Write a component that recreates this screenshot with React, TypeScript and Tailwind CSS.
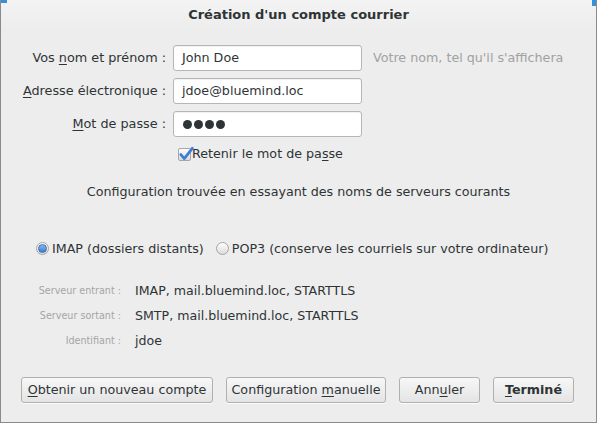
import React from 'react';

const font = { fontFamily: '"DejaVu Sans", sans-serif' };

const U: React.FC<{ children: React.ReactNode }> = ({ children }) => (
  <span className="underline underline-offset-2">{children}</span>
);

const Field: React.FC<{ label: React.ReactNode; value: React.ReactNode; hint?: string }> = ({ label, value, hint }) => (
  <div className="flex items-center h-[26px]">
    <div className="w-[165px] text-right text-[12.8px] text-[#2e3436]">{label}</div>
    <div className="w-[189px] h-[26px] ml-[7px] flex items-center px-[8px] bg-white border border-[#b6b6b3] rounded-[3px] text-[12.7px] text-[#2e3436] shadow-[inset_0_1px_1px_rgba(0,0,0,0.06)]">
      {value}
    </div>
    {hint && <div className="ml-[11px] text-[12.7px] text-[#a1a1a1]">{hint}</div>}
  </div>
);

const Radio: React.FC<{ checked?: boolean }> = ({ checked }) => (
  <span className="inline-flex w-[13px] h-[13px] rounded-full border border-[#a6a6a6] bg-gradient-to-b from-[#fdfdfd] to-[#dcdcdc] items-center justify-center">
    {checked && <span className="w-[9px] h-[9px] rounded-full bg-gradient-to-b from-[#8ab7ea] to-[#3a7fd3] border border-[#3b6fb0]" />}
  </span>
);

const Info: React.FC<{ label: string; value: string }> = ({ label, value }) => (
  <div className="flex items-center h-[25px]">
    <div className="w-[120px] text-right text-[9.6px] text-[#a5a5a5]">{label}</div>
    <div className="ml-[14px] text-[12.6px] text-[#2e3436]">{value}</div>
  </div>
);

const Btn: React.FC<{ children: React.ReactNode; w: string; bold?: boolean }> = ({ children, w, bold }) => (
  <button
    className={`${w} h-[26px] whitespace-nowrap border border-[#b0b0ad] rounded-[3px] bg-gradient-to-b from-[#f7f7f7] to-[#e4e4e4] shadow-[0_1px_0_rgba(255,255,255,0.8)] text-[12.7px] text-[#2e3436] ${bold ? 'font-bold' : ''}`}
  >
    {children}
  </button>
);

export default function App() {
  return (
    <div
      style={font}
      className="w-[597px] h-[423px] bg-[#ededed] border-x border-b border-[#8a8a8a] flex flex-col relative overflow-hidden"
    >
      <div className="absolute left-0 top-0 w-[6px] h-[3px] bg-[#3a8fd9]" />
      <div className="absolute right-0 top-0 w-[4px] h-[6px] bg-[#3a8fd9]" />
      <div className="h-[30px] flex items-center justify-center bg-gradient-to-b from-[#f3f3f3] to-[#ededed] text-[13px] font-bold text-[#2e3436]">
        Création d'un compte courrier
      </div>
      <div className="flex flex-col gap-[7px] mt-[15px]">
        <Field label={<>Vos <U>n</U>om et prénom :</>} value="John Doe" hint="Votre nom, tel qu'il s'affichera" />
        <Field label={<><U>A</U>dresse électronique :</>} value="jdoe@bluemind.loc" />
        <Field
          label={<><U>M</U>ot de passe :</>}
          value={
            <span className="flex gap-[2px] ml-[1px]">
              <span className="w-[9px] h-[9px] rounded-full bg-[#2e3436]" />
              <span className="w-[9px] h-[9px] rounded-full bg-[#2e3436]" />
              <span className="w-[9px] h-[9px] rounded-full bg-[#2e3436]" />
              <span className="w-[9px] h-[9px] rounded-full bg-[#2e3436]" />
            </span>
          }
        />
      </div>
      <div className="flex items-center ml-[177px] mt-[9px] h-[16px] text-[12.7px] text-[#2e3436]">
        <span className="relative w-[13px] h-[13px] border border-[#a6a6a6] rounded-[2px] bg-gradient-to-b from-[#fdfdfd] to-[#dcdcdc]">
          <svg viewBox="0 0 14 14" className="absolute -top-[3px] -left-[1px] w-[16px] h-[16px]">
            <path d="M2.5 7.5 L5.5 11 L12.5 2" fill="none" stroke="#3a7fd3" strokeWidth="2.4" strokeLinecap="round" strokeLinejoin="round" />
          </svg>
        </span>
        <span className="ml-[1px]">Retenir le mot de pa<U>s</U>se</span>
      </div>
      <div className="mt-[20px] text-center text-[12.7px] text-[#2e3436]">
        Configuration trouvée en essayant des noms de serveurs courants
      </div>
      <div className="flex items-center ml-[35px] mt-[38px] text-[12.7px] text-[#2e3436]">
        <Radio checked />
        <span className="ml-[3px]">IMAP (dossiers distants)</span>
        <span className="ml-[12px] flex"><Radio /></span>
        <span className="ml-[3px]">POP3 (conserve les courriels sur votre ordinateur)</span>
      </div>
      <div className="flex flex-col mt-[21px]">
        <Info label="Serveur entrant :" value="IMAP, mail.bluemind.loc, STARTTLS" />
        <Info label="Serveur sortant :" value="SMTP, mail.bluemind.loc, STARTTLS" />
        <Info label="Identifiant :" value="jdoe" />
      </div>
      <div className="flex items-center gap-[13px] mt-auto mb-[19px] pl-[20px]">
        <Btn w="w-[192px]"><U>O</U>btenir un nouveau compte</Btn>
        <Btn w="w-[160px]">Configuration <U>m</U>anuelle</Btn>
        <Btn w="w-[81px]">Ann<U>u</U>ler</Btn>
        <Btn w="w-[81px]" bold><U>T</U>erminé</Btn>
      </div>
    </div>
  );
}
